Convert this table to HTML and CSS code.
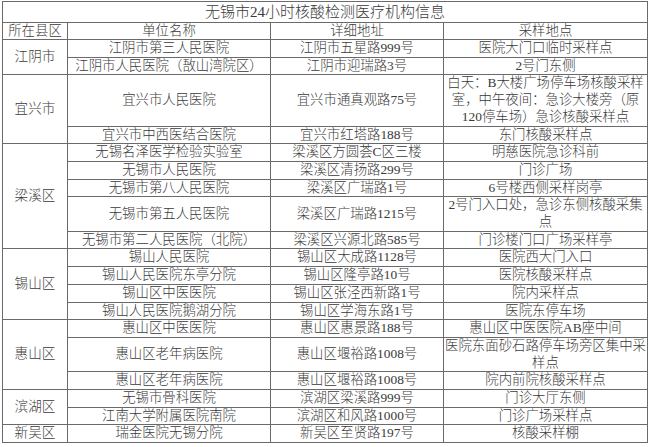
FILE: index.html
```html
<!DOCTYPE html>
<html lang="zh-CN">
<head>
<meta charset="utf-8">
<title>无锡市24小时核酸检测医疗机构信息</title>
<link rel="stylesheet" href="styles.css">
</head>
<body>
<table class="sheet">
  <colgroup>
    <col class="c-area">
    <col class="c-name">
    <col class="c-addr">
    <col class="c-site">
  </colgroup>
  <tbody>
    <tr class="title"><td colspan="4">无锡市24小时核酸检测医疗机构信息</td></tr>
    <tr class="head"><td>所在县区</td><td>单位名称</td><td>详细地址</td><td>采样地点</td></tr>

    <tr><td rowspan="2" class="area">江阴市</td><td>江阴市第三人民医院</td><td>江阴市五星路999号</td><td>医院大门口临时采样点</td></tr>
    <tr><td>江阴市人民医院（敔山湾院区）</td><td>江阴市迎瑞路3号</td><td>2号门东侧</td></tr>

    <tr><td rowspan="2" class="area">宜兴市</td><td>宜兴市人民医院</td><td>宜兴市通真观路75号</td><td>白天：B大楼广场停车场核酸采样室，中午夜间：急诊大楼旁（原120停车场）急诊核酸采样点</td></tr>
    <tr><td>宜兴市中西医结合医院</td><td>宜兴市红塔路188号</td><td>东门核酸采样点</td></tr>

    <tr><td rowspan="5" class="area">梁溪区</td><td>无锡名泽医学检验实验室</td><td>梁溪区方圆荟C区三楼</td><td>明慈医院急诊科前</td></tr>
    <tr><td>无锡市人民医院</td><td>梁溪区清扬路299号</td><td>门诊广场</td></tr>
    <tr><td>无锡市第八人民医院</td><td>梁溪区广瑞路1号</td><td>6号楼西侧采样岗亭</td></tr>
    <tr><td>无锡市第五人民医院</td><td>梁溪区广瑞路1215号</td><td>2号门入口处，急诊东侧核酸采集点</td></tr>
    <tr><td>无锡市第二人民医院（北院）</td><td>梁溪区兴源北路585号</td><td>门诊楼门口广场采样亭</td></tr>

    <tr><td rowspan="4" class="area">锡山区</td><td>锡山人民医院</td><td>锡山区大成路1128号</td><td>医院西大门入口</td></tr>
    <tr><td>锡山人民医院东亭分院</td><td>锡山区隆亭路10号</td><td>医院核酸采样点</td></tr>
    <tr><td>锡山区中医医院</td><td>锡山区张泾西新路1号</td><td>院内采样点</td></tr>
    <tr><td>锡山人民医院鹅湖分院</td><td>锡山区学海东路1号</td><td>医院东停车场</td></tr>

    <tr><td rowspan="3" class="area">惠山区</td><td>惠山区中医医院</td><td>惠山区惠景路188号</td><td>惠山区中医医院AB座中间</td></tr>
    <tr><td>惠山区老年病医院</td><td>惠山区堰裕路1008号</td><td>医院东面砂石路停车场旁区集中采样点</td></tr>
    <tr><td>惠山区老年病医院</td><td>惠山区堰裕路1008号</td><td>院内前院核酸采样点</td></tr>

    <tr><td rowspan="2" class="area">滨湖区</td><td>无锡市骨科医院</td><td>滨湖区梁溪路999号</td><td>门诊大厅东侧</td></tr>
    <tr><td>江南大学附属医院南院</td><td>滨湖区和风路1000号</td><td>门诊广场采样点</td></tr>

    <tr><td class="area">新吴区</td><td>瑞金医院无锡分院</td><td>新吴区至贤路197号</td><td>核酸采样棚</td></tr>
  </tbody>
</table>
</body>
</html>
```

FILE: styles.css
```css
html, body {
  margin: 0;
  padding: 0;
  background: #ffffff;
}

.sheet {
  margin: 1px 0 0 2px;
  width: 645px;
  table-layout: fixed;
  border-collapse: collapse;
  font-family: "Liberation Serif", "Noto Sans CJK SC", serif;
  font-size: 13.4px;
  font-weight: 300;
  color: #3a3a3a;
}

.c-area { width: 65px; }
.c-name { width: 203px; }
.c-addr { width: 173px; }
.c-site { width: 204px; }

.sheet td {
  border: 1px solid #6a6a6a;
  padding: 0;
  text-align: center;
  vertical-align: middle;
  line-height: 16.7px;
  white-space: normal;
}

.sheet .title td {
  font-size: 15px;
  line-height: 20px;
}

.sheet .head td {
  line-height: 16px;
}

.sheet td.area {
  font-size: 13.6px;
}
```
